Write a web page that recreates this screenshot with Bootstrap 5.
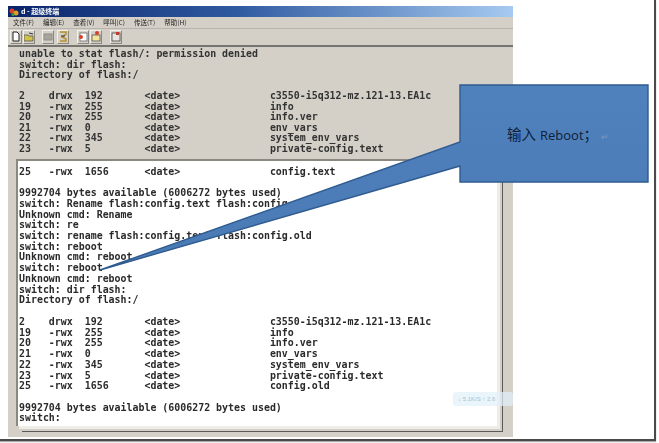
<!DOCTYPE html>
<html lang="zh">
<head>
<meta charset="utf-8">
<title>超级终端</title>
<link href="https://cdn.jsdelivr.net/npm/bootstrap@5.3.0/dist/css/bootstrap.min.css" rel="stylesheet">
<style>
html,body{background:#fff;margin:0;height:443px;overflow:hidden}
.sheet{width:656px;height:441px;padding:6px 0 0 8px;border-right:2px solid #4a4a4a;border-bottom:2px solid #4a4a4a;box-shadow:0 1px 1px #aaa;position:relative}
.win{width:505px;height:431px;background:#d4d0c8;filter:blur(.45px)}
.tbar{height:11px;background:linear-gradient(90deg,#0a246a 0%,#2f5aa0 45%,#a6caf0 100%);color:#fff;font:bold 7px/11px "Noto Sans CJK SC",sans-serif;gap:1px;padding-left:1px}
.mbar{height:12px;gap:9px;padding-left:5px;font:6.5px/10px "Noto Sans CJK SC",sans-serif;color:#222;border-bottom:1px solid #b8b4ac}
.tools{height:18px;padding:1px 0 0 2px;border-bottom:2px solid #77756f}
.tbtn{width:12px;height:14px;margin-right:1px;border:1px solid;border-color:#f2f0ec #8a8880 #8a8880 #f2f0ec}
.gap1{margin-left:6px}
.gap2{margin-left:2px}
.gap3{margin-left:7px}
.term,.panel{font:bold 9.94px/10.55px "DejaVu Sans Mono","Liberation Mono",monospace;color:#222;margin:0;white-space:pre;overflow:hidden}
.term{height:112px;padding:2px 0 0 11px;color:#333}
.panelbox{margin-left:8px;width:481px;height:267px;background:#fff;border-top:2px solid #8a8880;border-left:2px solid #8a8880;box-shadow:3px 3px 0 #efede8,5px 5px 0 #d4d0c8,6px 6px 0 #5a5a58}
.panel{padding:5.6px 0 0 1px;color:#2a2a2a;line-height:10.74px}
.callout{position:absolute;left:0;top:0;pointer-events:none}
.calltext{position:absolute;left:507px;top:124px;font:14.5px/20px "Noto Sans CJK SC",sans-serif;color:#0f2038;white-space:nowrap}
.latin{font:13px/20px "Open Sans",sans-serif;margin-left:4px}
.retmark{color:#7f99bd;font-size:9px;margin-left:3px}
.speed{position:absolute;left:453px;top:392px;width:60px;height:14px;background:rgba(225,240,250,.7);border-radius:3px;font:6px/14px "Liberation Sans",sans-serif;color:#a9c2cc;padding-left:5px;white-space:nowrap;overflow:hidden}
</style>
</head>
<body>
<div class="sheet">
  <div class="win">
    <div class="tbar d-flex align-items-center">
      <svg width="11" height="10" viewBox="0 0 11 10"><circle cx="3" cy="4" r="2.5" fill="#d8402a"/><circle cx="7" cy="6" r="2.5" fill="#e0a020"/><circle cx="4" cy="7.5" r="1.6" fill="#3f9a3f"/></svg>
      <span>d - 超级终端</span>
    </div>
    <div class="mbar d-flex"><span>文件(F)</span><span>编辑(E)</span><span>查看(V)</span><span>呼叫(C)</span><span>传送(T)</span><span>帮助(H)</span></div>
    <div class="tools d-flex align-items-start">
      <svg class="tbtn" viewBox="0 0 10 12"><path d="M2 1H6L8 3V10H2Z" fill="#fff" stroke="#222"/></svg>
      <svg class="tbtn" viewBox="0 0 10 12"><path d="M0 4H4L5 5H9V10H0Z" fill="#cfc24a" stroke="#555" stroke-width=".8"/><path d="M5 2L9 3" stroke="#333"/></svg>
      <svg class="tbtn gap1" viewBox="0 0 10 12"><rect x="1" y="3" width="8" height="6" fill="#a8a49c" stroke="#8f8d85"/></svg>
      <svg class="tbtn gap2" viewBox="0 0 10 12"><path d="M2 1H8V3L4 6L8 8V10H2" fill="none" stroke="#b8902c" stroke-width="1.5"/><path d="M3 5H7" stroke="#333"/></svg>
      <svg class="tbtn gap3" viewBox="0 0 10 12"><rect x="2" y="2" width="7" height="8" fill="#fff" stroke="#666" stroke-width=".8"/><circle cx="3" cy="6" r="2" fill="#d8402a"/></svg>
      <svg class="tbtn" viewBox="0 0 10 12"><rect x="1" y="4" width="8" height="6" fill="#f2e49a" stroke="#555" stroke-width=".8"/><circle cx="6" cy="2" r="2" fill="#d8402a"/></svg>
      <svg class="tbtn gap3" viewBox="0 0 10 12"><rect x="1" y="2" width="8" height="8" fill="#e8e6e0" stroke="#444" stroke-width=".8"/><rect x="5" y="1" width="3" height="3" fill="#c03a2a"/></svg>
    </div>
<pre class="term">unable to stat flash/: permission denied
switch: dir flash:
Directory of flash:/

2    drwx  192       &lt;date&gt;               c3550-i5q312-mz.121-13.EA1c
19   -rwx  255       &lt;date&gt;               info
20   -rwx  255       &lt;date&gt;               info.ver
21   -rwx  0         &lt;date&gt;               env_vars
22   -rwx  345       &lt;date&gt;               system_env_vars
23   -rwx  5         &lt;date&gt;               private-config.text</pre>
    <div class="panelbox">
<pre class="panel">25   -rwx  1656      &lt;date&gt;               config.text

9992704 bytes available (6006272 bytes used)
switch: Rename flash:config.text flash:config.old
Unknown cmd: Rename
switch: re
switch: rename flash:config.text flash:config.old
switch: reboot
Unknown cmd: reboot
switch: reboot
Unknown cmd: reboot
switch: dir flash:
Directory of flash:/

2    drwx  192       &lt;date&gt;               c3550-i5q312-mz.121-13.EA1c
19   -rwx  255       &lt;date&gt;               info
20   -rwx  255       &lt;date&gt;               info.ver
21   -rwx  0         &lt;date&gt;               env_vars
22   -rwx  345       &lt;date&gt;               system_env_vars
23   -rwx  5         &lt;date&gt;               private-config.text
25   -rwx  1656      &lt;date&gt;               config.old

9992704 bytes available (6006272 bytes used)
switch:</pre>
    </div>
  </div>
  <div class="speed">↓ 5.1K/S ↑ 2.6</div>
  <svg class="callout" width="656" height="441" viewBox="0 0 656 441">
    <defs><linearGradient id="tail" x1="0" y1="0" x2="0" y2="1"><stop offset="0" stop-color="#4f81bd"/><stop offset="1" stop-color="#4a7ab4"/></linearGradient></defs>
    <path d="M460 85H648V182H460V166L100 270L460 142Z" fill="url(#tail)" stroke="#2f5b8f" stroke-width="1.4"/>
  </svg>
  <div class="calltext">输入<span class="latin">Reboot</span>；<span class="retmark">↵</span></div>
</div>
</body>
</html>
